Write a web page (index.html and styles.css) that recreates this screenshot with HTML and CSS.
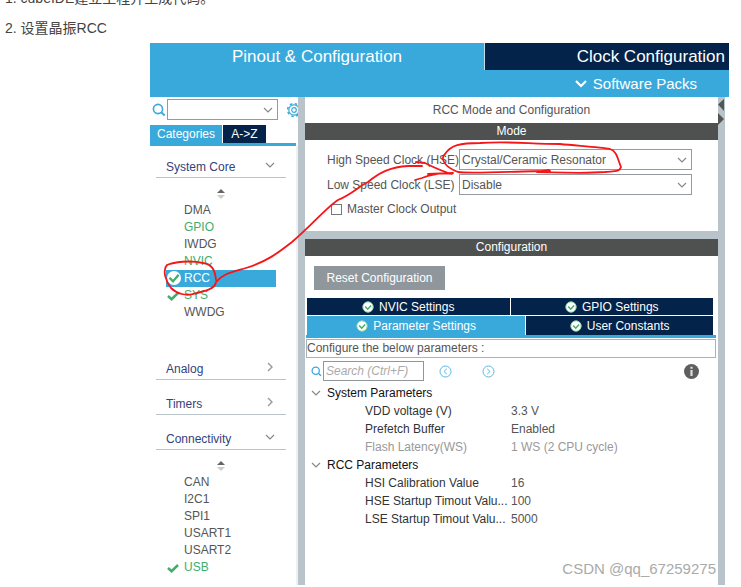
FILE: index.html
```
<!DOCTYPE html>
<html lang="zh-CN">
<head>
<meta charset="utf-8">
<title>设置晶振RCC</title>
<link rel="stylesheet" href="styles.css">
</head>
<body>
<svg class="defs" aria-hidden="true">
  <symbol id="down" viewBox="0 0 10 6"><path d="M1 1l4 4 4-4" fill="none" stroke="currentColor" stroke-width="1.2"/></symbol>
  <symbol id="right" viewBox="0 0 6 10"><path d="M1 1l4 4-4 4" fill="none" stroke="currentColor" stroke-width="1.4"/></symbol>
  <symbol id="sort" viewBox="0 0 8 10"><path d="M4 0l4 4H0z" fill="#666"/><path d="M0 6h8L4 10z" fill="#ccc"/></symbol>
  <symbol id="search" viewBox="0 0 14 14"><circle cx="6" cy="6" r="4.6" fill="none" stroke="#39a9dc" stroke-width="1.6"/><path d="M9.3 9.3l3.4 3.2" stroke="#39a9dc" stroke-width="1.9"/></symbol>
  <symbol id="tick" viewBox="0 0 12 10"><path d="M1 5l3.6 3.2L11 2" fill="none" stroke="#3fae6a" stroke-width="2.5"/></symbol>
  <symbol id="ok" viewBox="0 0 12 12"><circle cx="6" cy="6" r="5.2" fill="#fff" stroke="#8fd0a5" stroke-width="1"/><path d="M3.2 5.6l2.5 2.6 3.4-3.6" fill="none" stroke="#3fae6a" stroke-width="1.5"/></symbol>
</svg>
<ol class="steps">
  <li class="step step-cut"><span>1. cubeIDE建立工程并生成代码。</span></li>
  <li class="step"><span>2. 设置晶振RCC</span></li>
</ol>
<main class="ide">
  <nav class="top-tabs">
    <button class="top-tab current">Pinout &amp; Configuration</button>
    <button class="top-tab clock">Clock Configuration</button>
  </nav>
  <div class="packs"><button class="packs-btn"><svg class="packs-icon" viewBox="0 0 12 8"><path d="M1 1l5 5 5-5" fill="none" stroke="#fff" stroke-width="2.2"/></svg>Software Packs</button></div>
  <div class="work">
    <aside class="side">
      <div class="side-find">
        <svg class="i14"><use href="#search"/></svg>
        <span class="combo"><select aria-label="Search"><option></option></select><svg class="down"><use href="#down"/></svg></span>
        <span class="gear"><svg width="16" height="16" viewBox="0 0 16 16" fill="none" stroke="#39a9dc"><circle cx="8" cy="8" r="5.2" stroke-width="1.2"/><circle cx="8" cy="8" r="2.3" stroke-width="1.2"/><circle cx="8" cy="8" r="6.4" stroke-width="1.5" stroke-dasharray="2.5 2.52"/></svg></span>
      </div>
      <div class="side-tabs"><button class="side-tab on">Categories</button><button class="side-tab">A-&gt;Z</button></div>
      <div class="cats">
        <button class="cat first">System Core<svg class="down"><use href="#down"/></svg></button>
        <div class="sort"><svg><use href="#sort"/></svg></div>
        <ul class="items core">
          <li>DMA</li>
          <li class="green">GPIO</li>
          <li>IWDG</li>
          <li class="green">NVIC</li>
          <li class="picked"><svg class="picked-icon" viewBox="0 0 14 14"><circle cx="7" cy="7" r="7" fill="#fff"/><path d="M2.5 6.8l3.5 3.6 5.6-6.6" fill="none" stroke="#3fae6a" stroke-width="2.3"/></svg>RCC</li>
          <li class="green"><svg class="tick"><use href="#tick"/></svg>SYS</li>
          <li>WWDG</li>
        </ul>
        <button class="cat">Analog<svg class="right"><use href="#right"/></svg></button>
        <button class="cat">Timers<svg class="right"><use href="#right"/></svg></button>
        <button class="cat">Connectivity<svg class="down"><use href="#down"/></svg></button>
        <div class="sort"><svg><use href="#sort"/></svg></div>
        <ul class="items">
          <li>CAN</li>
          <li>I2C1</li>
          <li>SPI1</li>
          <li>USART1</li>
          <li>USART2</li>
          <li class="green"><svg class="tick"><use href="#tick"/></svg>USB</li>
        </ul>
      </div>
    </aside>
    <div class="bar"></div>
    <section class="panel">
      <h1 class="title">RCC Mode and Configuration</h1>
      <h2 class="strip">Mode</h2>
      <form class="mode">
        <div class="field"><label for="hse">High Speed Clock (HSE)</label><span class="combo"><select id="hse"><option>Crystal/Ceramic Resonator</option></select><svg class="down"><use href="#down"/></svg></span></div>
        <div class="field"><label for="lse">Low Speed Clock (LSE)</label><span class="combo"><select id="lse"><option>Disable</option></select><svg class="down"><use href="#down"/></svg></span></div>
        <label class="check"><input type="checkbox">Master Clock Output</label>
      </form>
      <div class="split"></div>
      <h2 class="strip">Configuration</h2>
      <div class="config">
        <button class="reset">Reset Configuration</button>
        <div class="tabs upper">
          <button class="tab"><svg class="i12"><use href="#ok"/></svg>NVIC Settings</button>
          <button class="tab"><svg class="i12"><use href="#ok"/></svg>GPIO Settings</button>
        </div>
        <div class="tabs lower">
          <button class="tab on"><svg class="i12"><use href="#ok"/></svg>Parameter Settings</button>
          <button class="tab"><svg class="i12"><use href="#ok"/></svg>User Constants</button>
        </div>
        <div class="underline"></div>
        <p class="hint">Configure the below parameters :</p>
        <div class="find">
          <svg class="i11"><use href="#search"/></svg>
          <input class="find-box" type="text" placeholder="Search (Ctrl+F)" aria-label="Search parameters">
          <button class="round" aria-label="Previous"><svg width="13" height="13" viewBox="0 0 13 13"><circle cx="6.5" cy="6.5" r="5.5"/><path d="M7.8 3.8L5 6.500l2.800 2.700"/></svg></button>
          <button class="round next" aria-label="Next"><svg width="13" height="13" viewBox="0 0 13 13"><circle cx="6.5" cy="6.5" r="5.5"/><path d="M5.200 3.800L8 6.500 5.200 9.200"/></svg></button>
          <button class="info" aria-label="Information"><svg width="15" height="15" viewBox="0 0 15 15"><circle cx="7.5" cy="7.5" r="7.5" fill="#5e5e5e"/><path d="M6.400 6h2.200v6H6.400zM6.400 2.800h2.200v2H6.400z" fill="#ddd"/></svg></button>
        </div>
        <table class="params">
          <tbody>
            <tr><th colspan="2" class="group"><svg class="down"><use href="#down"/></svg>System Parameters</th></tr>
            <tr><th>VDD voltage (V)</th><td>3.3 V</td></tr>
            <tr><th>Prefetch Buffer</th><td>Enabled</td></tr>
            <tr class="off"><th>Flash Latency(WS)</th><td>1 WS (2 CPU cycle)</td></tr>
            <tr><th colspan="2" class="group"><svg class="down"><use href="#down"/></svg>RCC Parameters</th></tr>
            <tr><th>HSI Calibration Value</th><td>16</td></tr>
            <tr><th>HSE Startup Timout Valu...</th><td>100</td></tr>
            <tr><th>LSE Startup Timout Valu...</th><td>5000</td></tr>
          </tbody>
        </table>
      </div>
    </section>
    <div class="bar end"><svg width="7" height="28" viewBox="0 0 7 28" fill="#555"><path d="M6 2v12L0 7.500zM0 16v12l6-6z"/></svg></div>
  </div>
  <svg class="marks" width="579" height="542" viewBox="150 43 579 542" fill="none" stroke="#f5161a" stroke-width="1.8" stroke-linecap="round" stroke-linejoin="round" aria-hidden="true">
    <path d="M216 280C215 270 212 264 203 263C190 260 174 262 167 265C162 270 166 282 171 288C177 294 186 296 193 294C206 291 215 289 216 282C224 273 232 272 246 268C266 262 278 253 292 242C312 225 328 206 338 200C352 194 358 187 368 182C380 172 391 167 408 166L422 166"/>
    <path d="M416 162L425 163C435 168 444 172 452 174C440 172 430 175 422 178L415 180M428 174L453 173"/>
    <path d="M550 171C520 171 470 174 458 172C444 167 440 158 445 154C451 145 460 143 480 143C510 141 530 144 560 144C580 146 600 147 610 149C617 151 618 160 621 167C620 172 614 171 605 172C580 174 550 172 537 172L549 170"/>
  </svg>
  <div class="watermark">CSDN @qq_67259275</div>
</main>
</body>
</html>
```
FILE: styles.css
```
* { box-sizing: border-box; }
body {
  margin: 0;
  background: #fff;
  color: #555;
  font: 12px/18px "Liberation Sans", "Noto Sans CJK SC", sans-serif;
}
button, select, input { font: inherit; color: inherit; border: 0; border-radius: 0; padding: 0; margin: 0; background: none; }
button { white-space: nowrap; }
h1, h2, p, ol, ul { margin: 0; padding: 0; font-weight: normal; font-size: 12px; list-style: none; }
svg { flex: none; }
.defs { display: none; }
.down { width: 10px; height: 6px; color: #888; }
.right { width: 6px; height: 10px; color: #999; }
.i14 { width: 14px; height: 14px; }
.i12 { width: 12px; height: 12px; }
.i11 { width: 11px; height: 11px; }

.steps { padding: 0 5px; }
.step { font-size: 14px; line-height: 22px; color: #444; margin-bottom: 4px; }
.step-cut { display: flex; align-items: flex-end; height: 9px; overflow: hidden; margin-bottom: 8px; }

.ide { position: relative; margin: 0 12px 0 150px; }
.top-tabs { display: flex; height: 27px; background: #39a9dc; }
.top-tab { flex: 1 1 334px; color: #fff; font-size: 17px; }
.top-tab.clock { flex: 1 1 245px; background: #03234b; border-left: 1px solid #c5dbe8; text-align: right; padding-right: 4px; }
.packs { display: flex; justify-content: flex-end; height: 27px; padding-right: 32px; background: #39a9dc; }
.packs-btn { display: flex; align-items: center; gap: 6px; color: #fff; font-size: 15px; }
.packs-icon { width: 12px; height: 8px; }

.work { display: flex; height: 488px; }
.bar { width: 7px; flex: none; background: #b8c3ca; }
.bar.end { margin-right: 4px; }
.bar.end svg { display: block; }

.side { width: 148px; flex: none; }
.side-find { display: flex; align-items: center; gap: 1px; padding-left: 2px; height: 25px; }
.side-find .combo { width: 111px; flex: none; }
.side-find .gear { flex: none; width: 12px; height: 16px; margin-left: 7px; overflow: hidden; }
.gear svg { display: block; }
.combo { position: relative; display: block; height: 21px; }
.combo select { appearance: none; display: block; width: 100%; height: 100%; padding: 0 2px; border: 1px solid #949a9f; background: #fff; }
.combo .down { position: absolute; right: 5px; top: 8px; pointer-events: none; }
.side-tabs { display: flex; gap: 1px; height: 24px; padding-top: 3px; margin-right: 2px; border-bottom: 3px solid #39a9dc; }
.side-tab { width: 43px; background: #03234b; color: #fff; }
.side-tab.on { width: 72px; background: #39a9dc; }
.cats { border-right: 2px solid #edf1f3; height: 439px; }
.cat { display: flex; align-items: flex-end; justify-content: space-between; width: 130px; height: 35px; margin-left: 6px; padding: 0 11px 1px 10px; border-bottom: 1px solid #b8c3ca; color: #35417a; }
.cat.first { height: 32px; }
.cat .down { margin-bottom: 8px; }
.cat .right { margin: 0 2px 6px 0; }
.sort { display: flex; justify-content: center; padding: 11px 5px 3px 0; }
.sort svg { width: 8px; height: 10px; }
.items li { position: relative; height: 17px; line-height: 17px; margin: 0 20px 0 16px; padding-left: 18px; }
.items.core { height: 143px; }
.items .green { color: #3fae6a; }
.items .picked { background: #39a9dc; color: #fff; }
.tick { position: absolute; left: 1px; top: 4px; width: 12px; height: 10px; }
.picked-icon { position: absolute; left: 1px; top: 1px; width: 14px; height: 14px; }

.panel { flex: 1; min-width: 0; }
.title { height: 26px; line-height: 26px; text-align: center; }
.strip { height: 17px; line-height: 17px; text-align: center; color: #fff; background: #4f5150; }
.mode { height: 91px; padding: 9px 26px 0 22px; }
.field { display: flex; align-items: center; height: 21px; margin-bottom: 4px; }
.field label { width: 132px; flex: none; white-space: nowrap; }
.field .combo { flex: 1; }
.check { display: flex; align-items: center; gap: 5px; padding: 1px 0 0 4px; }
.check input { appearance: none; width: 11px; height: 11px; border: 1px solid #777; }
.split { height: 8px; background: #b8c3ca; }
.config { padding: 10px 2px 0 1px; }
.reset { display: block; width: 131px; height: 24px; margin: 0 0 8px 8px; background: #8f979d; color: #fff; }
.tabs { display: flex; gap: 1px; margin: 0 3px 0 1px; }
.upper { margin-bottom: 1px; }
.tab { display: flex; align-items: center; justify-content: center; gap: 5px; flex: 1; height: 17px; background: #03234b; color: #fff; }
.lower .tab { height: 19px; flex: 0 0 46%; }
.lower .tab.on { flex: 1; background: #39a9dc; }
.underline { height: 3px; background: #39a9dc; }
.hint { height: 19px; margin-top: 1px; line-height: 17px; border: 1px solid #a9b2b8; color: #555; }
.find { display: flex; align-items: center; height: 20px; margin-top: 3px; padding: 0 17px 0 5px; }
.find-box { width: 101px; height: 20px; margin: 0 15px 0 1px; padding: 0 2px; border: 1px solid #8f979d; }
.find-box::placeholder { color: #aaa; font-style: italic; }
.round { width: 13px; height: 13px; }
.round svg { display: block; fill: none; stroke: #5bb7e0; }
.round.next { margin-left: 30px; }
.info { width: 15px; height: 15px; margin-left: auto; }
.info svg { display: block; }
.params { width: 100%; margin-top: 3px; border-collapse: collapse; table-layout: fixed; }
.params th, .params td { height: 18px; padding: 0; text-align: left; font-weight: normal; white-space: nowrap; }
.params th { padding-left: 59px; color: #333; width: 205px; }
.params .group { padding-left: 5px; color: #111; width: 205px; }
.group .down { margin: 0 6px 2px 0; vertical-align: middle; }
.params .off th, .params .off td { color: #999; }

.marks { position: absolute; left: 0; top: 0; pointer-events: none; }
.watermark { position: absolute; right: 13px; bottom: 7px; font-size: 15px; color: #aaa; }
```
